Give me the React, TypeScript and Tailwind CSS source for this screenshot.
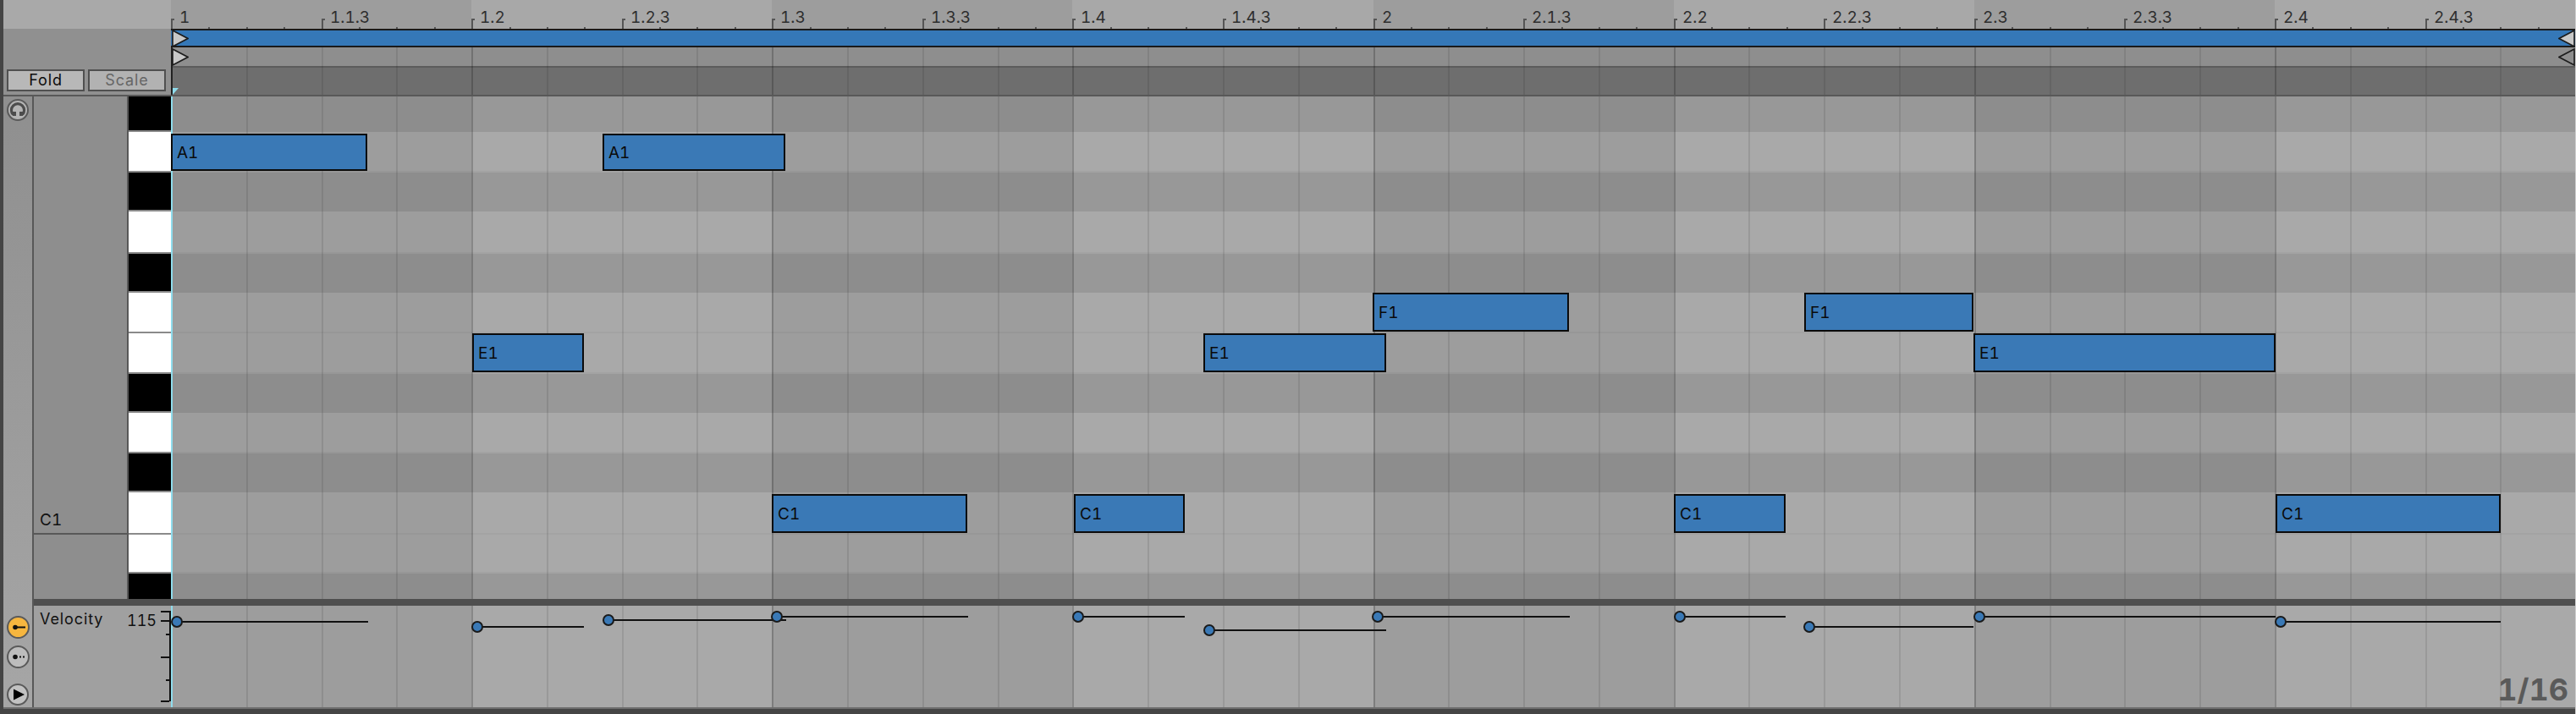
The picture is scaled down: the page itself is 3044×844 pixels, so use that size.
import React from "react"

// -------------------------------------------------------------------
// Data (coordinates are page pixels of the roll)
// -------------------------------------------------------------------

const GRID_X = 203
const STEP = 88.785
const ROLL_X = 204
const ROLL_Y = 114
const VEL_Y = 716

const KEYS = [
  { h: 42, black: true },
  { h: 48, black: false },
  { h: 46, black: true },
  { h: 50, black: false },
  { h: 46, black: true },
  { h: 48, black: false },
  { h: 48, black: false },
  { h: 46, black: true },
  { h: 48, black: false },
  { h: 46, black: true },
  { h: 50, black: false },
  { h: 46, black: false },
  { h: 30, black: true },
]

const NOTES = [
  { name: "A1", x1: 202, x2: 434, y1: 158, y2: 202, vel: 735, dot: 209, end: 435 },
  { name: "E1", x1: 558, x2: 690, y1: 394, y2: 440, vel: 741, dot: 564, end: 690 },
  { name: "A1", x1: 712, x2: 928, y1: 158, y2: 202, vel: 733, dot: 719, end: 929 },
  { name: "C1", x1: 912, x2: 1143, y1: 584, y2: 630, vel: 729, dot: 918, end: 1144 },
  { name: "C1", x1: 1269, x2: 1400, y1: 584, y2: 630, vel: 729, dot: 1274, end: 1400 },
  { name: "E1", x1: 1422, x2: 1638, y1: 394, y2: 440, vel: 745, dot: 1429, end: 1638 },
  { name: "F1", x1: 1622, x2: 1854, y1: 346, y2: 392, vel: 729, dot: 1628, end: 1855 },
  { name: "C1", x1: 1978, x2: 2110, y1: 584, y2: 630, vel: 729, dot: 1985, end: 2110 },
  { name: "F1", x1: 2132, x2: 2332, y1: 346, y2: 392, vel: 741, dot: 2138, end: 2332 },
  { name: "E1", x1: 2332, x2: 2689, y1: 394, y2: 440, vel: 729, dot: 2339, end: 2689 },
  { name: "C1", x1: 2689, x2: 2955, y1: 584, y2: 630, vel: 735, dot: 2695, end: 2955 },
]

const RULER_LABELS = [
  "1", "1.1.3", "1.2", "1.2.3", "1.3", "1.3.3", "1.4", "1.4.3",
  "2", "2.1.3", "2.2", "2.2.3", "2.3", "2.3.3", "2.4", "2.4.3",
]

const VEL_TICKS = [
  { y: 722, long: true },
  { y: 733, long: true },
  { y: 749, long: false },
  { y: 776, long: true },
  { y: 803, long: false },
  { y: 828, long: true },
]

// -------------------------------------------------------------------
// Grid overlay
// -------------------------------------------------------------------

function GridOverlay({ shade = true }: { shade?: boolean }) {
  const cols = Array.from({ length: 32 }, (_, i) => i)
  const edge = (i: number) => Math.round(GRID_X + STEP * i) - 1
  return (
    <div className="pointer-events-none absolute inset-0 flex">
      {cols.map((i) => {
        const beat = Math.floor(i / 4)
        const width = i === 0 ? edge(1) - ROLL_X : edge(i + 1) - edge(i)
        let cls = "h-full flex-none "
        if (i > 0) cls += i % 4 === 0 ? "border-l-2 border-black/20 " : "border-l-2 border-black/[0.09] "
        if (shade && beat % 2 === 0) cls += "bg-black/[0.07]"
        return <div key={i} className={cls} style={{ width }} />
      })}
    </div>
  )
}

// -------------------------------------------------------------------
// Ruler
// -------------------------------------------------------------------

function Ruler() {
  const edge = (i: number) => Math.round(GRID_X + (STEP / 2) * i) - 1
  const ticks = Array.from({ length: 64 }, (_, i) => i)
  return (
    <div className="relative flex h-[34px] bg-[#a8a8a8]">
      {ticks.map((i) => {
        const major = i % 4 === 0
        const dark = Math.floor(i / 8) % 2 === 0
        return (
          <div
            key={i}
            className={dark ? "relative h-full flex-none bg-[#9d9d9d]" : "relative h-full flex-none"}
            style={{ width: edge(i + 1) - edge(i) }}
          >
            {major ? (
              <>
                <div className="absolute bottom-0 left-0 h-[12px] w-[2px] bg-[#555555]" />
                <div className="absolute bottom-[10px] left-0 h-[2px] w-[4px] bg-[#555555]" />
                <span className="absolute bottom-[1px] left-[10px] z-10 text-[19px] leading-[24px] whitespace-nowrap text-[#2e2e2e]">
                  {RULER_LABELS[i / 4]}
                </span>
              </>
            ) : (
              <div className="absolute bottom-0 left-0 h-[2px] w-[2px] bg-[#555555]" />
            )}
          </div>
        )
      })}
    </div>
  )
}

// -------------------------------------------------------------------
// Small controls
// -------------------------------------------------------------------

function LoopFlag({ flip, filled }: { flip?: boolean; filled?: boolean }) {
  const pts = flip ? "19,1 1,10.5 19,20" : "1,1 19,10.5 1,20"
  return (
    <svg width="20" height="21" viewBox="0 0 20 21" className="block">
      <polygon points={pts} fill={filled ? "#c8c8c8" : "none"} stroke="#1c1c1c" strokeWidth="1.6" />
    </svg>
  )
}

function RoundButton({ size, fill, children }: { size: number; fill: string; children: React.ReactNode }) {
  const r = size / 2
  return (
    <svg width={size} height={size} viewBox={`0 0 ${size} ${size}`} className="block flex-none">
      <circle cx={r} cy={r} r={r - 1} fill={fill} stroke="#5a5a5a" strokeWidth="2" />
      {children}
    </svg>
  )
}

function Sidebar() {
  return (
    <div className="flex w-[36px] flex-none flex-col items-center justify-between border-r-2 border-[#585858] bg-gradient-to-b from-[#8f8f8f] to-[#a6a6a6] pt-[3px] pb-[2px]">
      <RoundButton size={26} fill="#b4b4b4">
        <path d="M7.5 18.5 A7.6 7.6 0 1 1 18.5 18.5" fill="none" stroke="#4c4c4c" strokeWidth="3.2" />
        <rect x="7" y="15" width="4" height="5" fill="#4c4c4c" />
        <rect x="15" y="15" width="4" height="5" fill="#4c4c4c" />
      </RoundButton>
      <div className="flex flex-col items-center">
        <RoundButton size={27} fill="#f6b63f">
          <circle cx="10" cy="13.5" r="2.8" fill="#111" />
          <rect x="10" y="12.5" width="12" height="2" fill="#111" />
        </RoundButton>
        <div className="mt-[8px]">
          <RoundButton size={27} fill="#bdbdbd">
            <circle cx="10" cy="13.5" r="2.8" fill="#111" />
            <rect x="15" y="12.5" width="2" height="2" fill="#111" />
            <rect x="19" y="12.5" width="2" height="2" fill="#111" />
          </RoundButton>
        </div>
        <div className="mt-[18px]">
          <RoundButton size={26} fill="#c2c2c2">
            <polygon points="8,6.5 21,13 8,19.5" fill="#000" />
          </RoundButton>
        </div>
      </div>
    </div>
  )
}

function HeaderButton({ label, dim }: { label: string; dim?: boolean }) {
  return (
    <div
      className={
        dim
          ? "flex h-[26px] w-[92px] items-center justify-center border-2 border-[#505050] bg-[#b2b2b2] text-[18px] leading-none tracking-[0.05em] text-[#666666]"
          : "flex h-[26px] w-[92px] items-center justify-center border-2 border-[#505050] bg-[#b8b8b8] text-[18px] leading-none tracking-[0.05em] text-[#0c0c0c]"
      }
    >
      {label}
    </div>
  )
}

// -------------------------------------------------------------------
// App
// -------------------------------------------------------------------

export default function App() {
  return (
    <div className="flex h-[844px] w-[3044px] flex-col overflow-hidden border-r border-[#cfcfcf] bg-[#454545] pl-[4px] font-['Inter',sans-serif] tabular-nums text-[#111111]">
      {/* Header */}
      <div className="flex h-[114px] flex-none border-b-2 border-[#585858]">
        <div className="flex w-[198px] flex-none flex-col">
          <div className="h-[34px] bg-[#a9a9a9]" />
          <div className="flex flex-1 items-start gap-[4px] bg-[#909090] pt-[48px] pl-[4px]">
            <HeaderButton label="Fold" />
            <HeaderButton label="Scale" dim />
          </div>
        </div>
        <div className="relative flex min-w-0 flex-1 flex-col">
          <Ruler />
          <div className="h-[22px] border-y-2 border-[#1a1a1a] bg-[#3578b8]" />
          <div className="relative flex-1 border-l-2 border-[#222222]">
            <div className="h-[22px] bg-[#8e8e8e]" />
            <div className="h-[34px] border-t-2 border-[#5c5c5c] bg-[#6e6e6e]" />
            <GridOverlay shade={false} />
            {/* playhead marker */}
            <svg width="7" height="8" viewBox="0 0 7 8" className="absolute bottom-0 left-0 block">
              <polygon points="0,0 7,0 0,8" fill="#8fdcec" />
            </svg>
          </div>
          <div className="absolute top-[35px] left-[1px]">
            <LoopFlag filled />
          </div>
          <div className="absolute top-[57px] left-[1px]">
            <LoopFlag filled />
          </div>
          <div className="absolute top-[35px] right-0">
            <LoopFlag flip filled />
          </div>
          <div className="absolute top-[57px] right-0">
            <LoopFlag flip />
          </div>
        </div>
      </div>

      {/* Body */}
      <div className="flex h-[722px] flex-none">
        <Sidebar />
        <div className="flex min-w-0 flex-1 flex-col">
          {/* Piano roll */}
          <div className="flex h-[594px] flex-none">
            <div className="flex w-[112px] flex-none flex-col border-r-2 border-[#585858] bg-[#8e8e8e]">
              <div className="flex h-[518px] flex-none items-end border-b-2 border-[#585858] pb-[6px] pl-[7px] text-[19px] leading-none">
                C1
              </div>
            </div>
            <div className="flex w-[50px] flex-none flex-col">
              {KEYS.map((k, i) => (
                <div
                  key={i}
                  style={{ height: k.h }}
                  className={
                    i === KEYS.length - 1
                      ? "flex-none bg-black"
                      : k.black
                        ? "flex-none border-b-2 border-[#8a8a8a] bg-black"
                        : "flex-none border-b-2 border-[#8a8a8a] bg-white"
                  }
                />
              ))}
            </div>
            <div className="w-[2px] flex-none bg-[#8fdcec]" />
            <div className="relative min-w-0 flex-1">
              {KEYS.map((k, i) => (
                <div
                  key={i}
                  style={{ height: k.h }}
                  className={k.black ? "bg-[#989898]" : "border-b-2 border-black/[0.03] bg-[#a9a9a9]"}
                />
              ))}
              <GridOverlay />
              {NOTES.map((n, i) => (
                <div
                  key={i}
                  className="absolute flex items-center border-2 border-[#0b0b0b] bg-[#3a79b6] pl-[5px] text-[19px] leading-none text-[#0a0a0a]"
                  style={{
                    left: n.x1 - ROLL_X,
                    top: n.y1 - ROLL_Y,
                    width: n.x2 - n.x1,
                    height: n.y2 - n.y1,
                  }}
                >
                  {n.name}
                </div>
              ))}
            </div>
          </div>

          <div className="h-[8px] flex-none bg-[#4f4f4f]" />

          {/* Velocity lane */}
          <div className="flex h-[120px] flex-none">
            <div className="relative w-[162px] flex-none bg-[#a0a0a0]">
              <div className="flex items-start justify-between pt-[6px] pr-[17px] pl-[7px] text-[18px] leading-[20px]">
                <span className="tracking-[0.05em]">Velocity</span>
                <span className="pt-[2px]">115</span>
              </div>
              {/* scale */}
              <div className="absolute top-[6px] right-0 h-[107px] w-[2px] bg-[#111111]" />
              {VEL_TICKS.map((t) => (
                <div
                  key={t.y}
                  className={
                    t.long
                      ? "absolute right-[2px] h-[2px] w-[10px] bg-[#111111]"
                      : "absolute right-[2px] h-[2px] w-[4px] bg-[#111111]"
                  }
                  style={{ top: t.y - VEL_Y }}
                />
              ))}
            </div>
            <div className="w-[2px] flex-none bg-[#8fdcec]" />
            <div className="relative min-w-0 flex-1 bg-[#a9a9a9]">
              <GridOverlay />
              {NOTES.map((n, i) => (
                <React.Fragment key={i}>
                  <div
                    className="absolute h-[2px] bg-[#111111]"
                    style={{ left: n.dot - ROLL_X, width: n.end - n.dot, top: n.vel - VEL_Y - 1 }}
                  />
                  <div
                    className="absolute h-[14px] w-[14px] rounded-full border-2 border-[#1a1a1a] bg-[#3a79b6]"
                    style={{ left: n.dot - ROLL_X - 7, top: n.vel - VEL_Y - 7 }}
                  />
                </React.Fragment>
              ))}
              <span className="absolute right-[8px] bottom-[1px] text-[36px] leading-[40px] font-bold text-[#5a5a5a]">
                1/16
              </span>
            </div>
          </div>
        </div>
      </div>

      {/* Footer */}
      <div className="h-[8px] flex-none border-t-2 border-[#6e6e6e] bg-[#454545]" />
    </div>
  )
}
